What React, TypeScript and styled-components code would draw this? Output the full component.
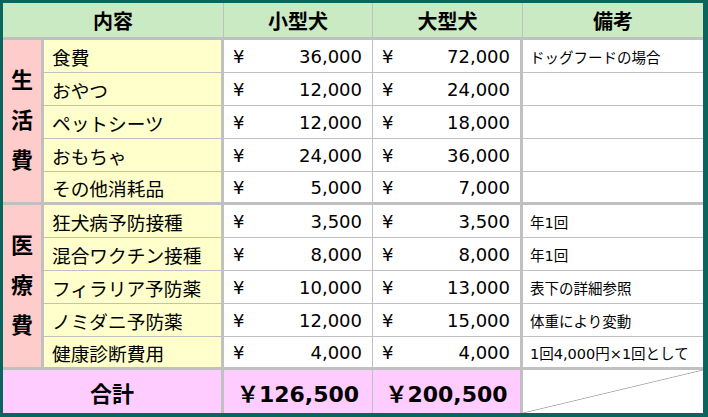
import styled, { createGlobalStyle } from 'styled-components';

const GlobalStyle = createGlobalStyle`
  html, body {
    margin: 0;
    padding: 0;
    background: #fff;
  }
  body {
    font-family: "DejaVu Sans", "Noto Sans CJK JP", sans-serif;
    color: #000;
  }
`;

const LINE = '#c0c0c0';

const Frame = styled.div`
  width: 708px;
  height: 417px;
  box-sizing: border-box;
  border-style: solid;
  border-color: #08665f;
  border-width: 3px 5px 4px 3px;
  display: grid;
  grid-template-columns: 41px 180px 149px 150px 180px;
  grid-template-rows: 37px repeat(10, 33px) 43px;
  background: #fff;
`;

const BaseCell = styled.div`
  box-sizing: border-box;
  display: flex;
  align-items: center;
  min-width: 0;
  overflow: hidden;
  white-space: nowrap;
`;

const HeadCell = styled(BaseCell)<{ $span?: number; $last?: boolean }>`
  grid-column: span ${(p) => p.$span ?? 1};
  justify-content: center;
  background: #c9eac3;
  border-bottom: 3px solid ${LINE};
  border-right: ${(p) => (p.$last ? 0 : 1)}px solid ${LINE};
  font-size: 20px;
  font-weight: bold;
`;

const CategoryCell = styled(BaseCell)`
  grid-row: span 5;
  flex-direction: column;
  justify-content: center;
  background: #ffcccc;
  border-right: 3px solid ${LINE};
  border-bottom: 3px solid ${LINE};
  font-size: 22px;
  font-weight: bold;
  line-height: 40px;
`;

const ItemCell = styled(BaseCell)<{ $end?: boolean }>`
  background: #ffffcc;
  border-right: 3px solid ${LINE};
  border-bottom: ${(p) => (p.$end ? 3 : 1)}px solid ${LINE};
  padding-left: 8px;
  font-size: 18.7px;
`;

const MoneyCell = styled(BaseCell)<{ $end?: boolean; $thick?: boolean }>`
  justify-content: space-between;
  border-right: ${(p) => (p.$thick ? 3 : 1)}px solid ${LINE};
  border-bottom: ${(p) => (p.$end ? 3 : 1)}px solid ${LINE};
  padding: 0 10px 0 9px;
  font-size: 18px;
`;

const NoteCell = styled(BaseCell)<{ $end?: boolean }>`
  border-bottom: ${(p) => (p.$end ? 3 : 1)}px solid ${LINE};
  padding-left: 7px;
  font-size: 14.5px;
`;

const TotalLabel = styled(BaseCell)`
  grid-column: span 2;
  justify-content: center;
  background: #ffccff;
  border-right: 3px solid ${LINE};
  font-size: 22px;
  font-weight: bold;
`;

const TotalValue = styled(BaseCell)<{ $thick?: boolean }>`
  justify-content: center;
  background: #ffccff;
  border-right: ${(p) => (p.$thick ? 3 : 1)}px solid ${LINE};
  font-size: 22px;
  font-weight: bold;
`;

const TotalNote = styled(BaseCell)`
  background: linear-gradient(
    to bottom right,
    transparent calc(50% - 0.8px),
    #a8a8a8 50%,
    transparent calc(50% + 0.8px)
  );
`;

type Row = { item: string; small: string; large: string; note?: string };

const groups: { label: string; rows: Row[] }[] = [
  {
    label: '生活費',
    rows: [
      { item: '食費', small: '36,000', large: '72,000', note: 'ドッグフードの場合' },
      { item: 'おやつ', small: '12,000', large: '24,000' },
      { item: 'ペットシーツ', small: '12,000', large: '18,000' },
      { item: 'おもちゃ', small: '24,000', large: '36,000' },
      { item: 'その他消耗品', small: '5,000', large: '7,000' },
    ],
  },
  {
    label: '医療費',
    rows: [
      { item: '狂犬病予防接種', small: '3,500', large: '3,500', note: '年1回' },
      { item: '混合ワクチン接種', small: '8,000', large: '8,000', note: '年1回' },
      { item: 'フィラリア予防薬', small: '10,000', large: '13,000', note: '表下の詳細参照' },
      { item: 'ノミダニ予防薬', small: '12,000', large: '15,000', note: '体重により変動' },
      { item: '健康診断費用', small: '4,000', large: '4,000', note: '1回4,000円×1回として' },
    ],
  },
];

export default function App() {
  return (
    <>
      <GlobalStyle />
      <Frame>
        <HeadCell $span={2}>内容</HeadCell>
        <HeadCell>小型犬</HeadCell>
        <HeadCell>大型犬</HeadCell>
        <HeadCell $last>備考</HeadCell>

        {groups.map((g) => [
          <CategoryCell key={g.label}>
            {g.label.split('').map((ch, i) => (
              <span key={i}>{ch}</span>
            ))}
          </CategoryCell>,
          ...g.rows.map((r, i) => {
            const end = i === g.rows.length - 1;
            return [
              <ItemCell key={r.item} $end={end}>
                {r.item}
              </ItemCell>,
              <MoneyCell key={r.item + 's'} $end={end}>
                <span>¥</span>
                <span>{r.small}</span>
              </MoneyCell>,
              <MoneyCell key={r.item + 'l'} $end={end} $thick>
                <span>¥</span>
                <span>{r.large}</span>
              </MoneyCell>,
              <NoteCell key={r.item + 'n'} $end={end}>
                {r.note}
              </NoteCell>,
            ];
          }),
        ])}

        <TotalLabel>合計</TotalLabel>
        <TotalValue>￥126,500</TotalValue>
        <TotalValue $thick>￥200,500</TotalValue>
        <TotalNote />
      </Frame>
    </>
  );
}
